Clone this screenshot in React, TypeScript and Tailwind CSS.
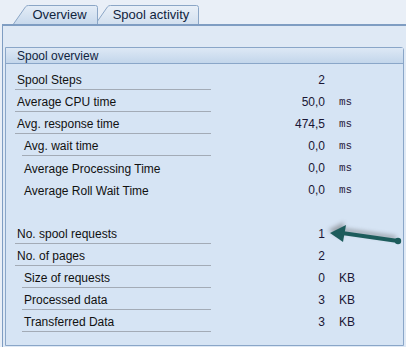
type Row = {
  label: string;
  value?: string;
  unit?: string;
  indent?: boolean;
  line?: boolean;
  mono?: boolean;
};

const rows: Row[] = [
  { label: "Spool Steps", value: "2", line: true },
  { label: "Average CPU time", value: "50,0", unit: "ms", mono: true, line: true },
  { label: "Avg. response time", value: "474,5", unit: "ms", mono: true, line: true },
  { label: "Avg. wait time", value: "0,0", unit: "ms", mono: true, indent: true, line: true },
  { label: "Average Processing Time", value: "0,0", unit: "ms", mono: true, indent: true },
  { label: "Average Roll Wait Time", value: "0,0", unit: "ms", mono: true, indent: true },
  { label: "" },
  { label: "No. spool requests", value: "1", line: true },
  { label: "No. of pages", value: "2", line: true },
  { label: "Size of requests", value: "0", unit: "KB", indent: true, line: true },
  { label: "Processed data", value: "3", unit: "KB", indent: true, line: true },
  { label: "Transferred Data", value: "3", unit: "KB", indent: true, line: true },
];

function Tab({ id, label, active, width, className }: { id: string; label: string; active?: boolean; width: number; className?: string }) {
  const w = width;
  return (
    <div className={`relative h-[19px] ${className ?? ""}`} style={{ width: w }}>
      <svg className="absolute inset-0" width={w} height={19} viewBox={`0 0 ${w} 19`}>
        <defs>
          <linearGradient id={id} x1="0" y1="0" x2="0" y2="1">
            <stop offset="0" stopColor={active ? "#e4edf7" : "#e9f0f8"} />
            <stop offset="1" stopColor={active ? "#c8d9ec" : "#d3e0ef"} />
          </linearGradient>
        </defs>
        <path
          d={`M0.5,19 L12.5,1.8 Q13.5,0.5 15.5,0.5 L${w - 2.5},0.5 Q${w - 0.5},0.5 ${w - 0.5},2.5 L${w - 0.5},19`}
          fill={`url(#${id})`}
          stroke="#8ba6c6"
          strokeWidth="1"
        />
      </svg>
      <span className="relative flex h-full items-center justify-center pl-[8px] pt-[1px] text-[13px] text-[#10243e]">
        {label}
      </span>
    </div>
  );
}

export default function App() {
  return (
    <div
      className="relative h-[347px] w-[406px] overflow-hidden bg-[#e9eff7] text-[12px] text-[#111]"
      style={{ fontFamily: '"Liberation Sans", Arial, sans-serif' }}
    >
      {/* Tabs */}
      <div className="flex h-[24px] items-end pl-[13px]">
        <Tab id="tab-overview" label="Overview" active width={85} className="z-10" />
        <Tab id="tab-activity" label="Spool activity" width={104} className="-ml-[3px]" />
      </div>

      {/* Panel */}
      <div className="ml-[2px] h-[323px] border-l border-t-2 border-[#7f9dc2] bg-[#dfe9f5] pl-[2px] pt-[21px]">
        <div className="h-[299px] w-[399px] rounded-tr-[3px] border border-[#8aa6c8] bg-[#d6e4f4]">
          <div className="flex h-[16px] items-center border-b border-[#8aa6c8] bg-gradient-to-b from-[#dde8f5] to-[#c3d6eb] pl-[11px] text-[12px] text-[#10243e]">
            Spool overview
          </div>

          <div className="pt-[4px]">
            {rows.map((r, i) => (
              <div key={i} className="flex h-[22px] items-end">
                <div
                  className={`flex h-[22px] items-center pl-[2px] pt-[3px] ${r.indent ? "ml-[16px] w-[189px]" : "ml-[9px] w-[196px]"} ${r.line ? "border-b border-[#a3abb6]" : ""}`}
                >
                  {r.label}
                </div>
                <div className="flex h-[22px] items-center pt-[2px]">
                  <span className="w-[114px] text-right text-[#1a1634]">{r.value}</span>
                  {r.unit && (
                    <span
                      className={`ml-[14px] ${r.mono ? "text-[11px] text-[#2a2040]" : "text-[12px] text-[#1a1634]"}`}
                      style={r.mono ? { fontFamily: '"Liberation Mono", "Courier New", monospace' } : undefined}
                    >
                      {r.unit}
                    </span>
                  )}
                </div>
              </div>
            ))}
          </div>
        </div>
      </div>

      {/* Arrow annotation */}
      <svg className="absolute left-[320px] top-[215px]" width="86" height="40" viewBox="0 0 86 40">
        <defs>
          <filter id="blur" x="-20%" y="-50%" width="140%" height="200%">
            <feGaussianBlur stdDeviation="2" />
          </filter>
        </defs>
        <g opacity="0.45" filter="url(#blur)" transform="translate(-2,-3)">
          <path d="M10,18 L26,10 L24,26 Z" fill="#555" />
          <line x1="24" y1="18" x2="78" y2="26" stroke="#555" strokeWidth="4" />
        </g>
        <path d="M10,18 L26,10 L23,27 Z" fill="#1d5c5c" />
        <line x1="22" y1="18" x2="78" y2="26" stroke="#1d5c5c" strokeWidth="4" strokeLinecap="round" />
        <circle cx="78" cy="26" r="3.2" fill="#1d5c5c" />
      </svg>
    </div>
  );
}
